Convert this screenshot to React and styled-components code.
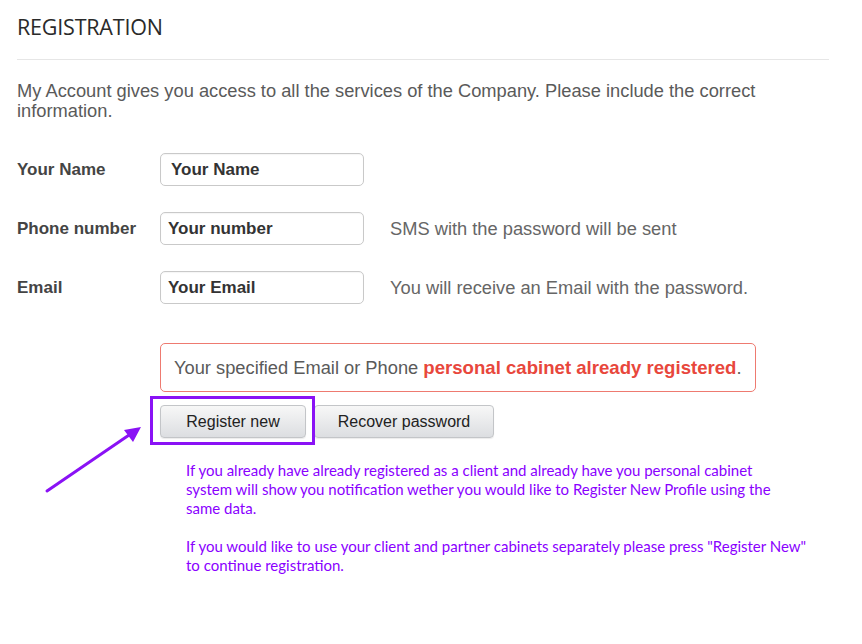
import React from 'react';
import styled, { createGlobalStyle } from 'styled-components';

const GlobalStyle = createGlobalStyle`
  html, body {
    margin: 0;
    padding: 0;
    background: #ffffff;
  }
  body {
    font-family: "Liberation Sans", Arial, sans-serif;
  }
`;

const Page = styled.div`
  position: relative;
  width: 862px;
  height: 644px;
  box-sizing: border-box;
  padding: 13px 33px 0 17px;
`;

const Title = styled.h1`
  margin: 0;
  font-family: "Open Sans", sans-serif;
  font-weight: 400;
  font-size: 21.5px;
  line-height: 27px;
  color: #2a2a2a;
  letter-spacing: -0.2px;
`;

const Rule = styled.hr`
  margin: 19px 0 0 0;
  border: 0;
  border-top: 1px solid #e6e6e6;
  width: 812px;
`;

const Intro = styled.p`
  margin: 21px 0 0 0;
  font-size: 18.3px;
  line-height: 20px;
  color: #5a5a5a;
`;

const Form = styled.div`
  margin-top: 32px;
  display: flex;
  flex-direction: column;
  gap: 26px;
`;

const Row = styled.div`
  display: flex;
  align-items: center;
  height: 33px;
`;

const Label = styled.label`
  width: 143px;
  font-size: 17px;
  font-weight: 700;
  color: #444;
`;

const Field = styled.div`
  width: 204px;
  height: 33px;
  box-sizing: border-box;
  border: 1px solid #c9c9c9;
  border-radius: 5px;
  display: flex;
  align-items: center;
  padding-left: ${(p) => p.$pad}px;
  font-size: 17px;
  font-weight: 700;
  color: #333;
  box-shadow: inset 0 1px 1px rgba(0, 0, 0, 0.04);
`;

const Hint = styled.span`
  margin-left: 26px;
  font-size: 18.3px;
  color: #666;
`;

const Bottom = styled.div`
  margin-left: 143px;
  position: relative;
`;

const ErrorBox = styled.div`
  margin-top: 39px;
  width: 596px;
  height: 49px;
  box-sizing: border-box;
  border: 1px solid #ee7a70;
  border-radius: 5px;
  display: flex;
  align-items: center;
  padding-left: 13px;
  font-size: 18.3px;
  color: #5a5a5a;
`;

const Strong = styled.strong`
  color: #e8473c;
  font-weight: 700;
  font-size: 18.6px;
`;

const Buttons = styled.div`
  margin-top: 13px;
  display: flex;
  gap: 8px;
  position: relative;
`;

const Button = styled.button`
  width: ${(p) => p.$w}px;
  height: 33px;
  border: 1px solid #c3c5c8;
  border-radius: 4px;
  background: linear-gradient(#f7f7f7, #dcdee1);
  box-shadow: 0 1px 1px rgba(0, 0, 0, 0.08);
  font-family: "Liberation Sans", Arial, sans-serif;
  font-size: 16px;
  color: #222;
  padding: 0;
`;

const Highlight = styled.div`
  position: absolute;
  left: -10px;
  top: -9px;
  width: 165px;
  height: 49px;
  box-sizing: border-box;
  border: 3px solid #8a12f5;
  pointer-events: none;
`;

const Notes = styled.div`
  margin: 23px 0 0 26px;
  font-family: Lato, sans-serif;
  font-size: 15px;
  line-height: 19px;
  color: #8a00ff;
`;

const Arrow = styled.svg`
  position: absolute;
  left: 40px;
  top: 420px;
`;

export default function App() {
  return (
    <>
      <GlobalStyle />
      <Page>
        <Title>REGISTRATION</Title>
        <Rule />
        <Intro>
          My Account gives you access to all the services of the Company. Please include the correct
          information.
        </Intro>
        <Form>
          <Row>
            <Label>Your Name</Label>
            <Field $pad={10}>Your Name</Field>
          </Row>
          <Row>
            <Label>Phone number</Label>
            <Field $pad={7}>Your number</Field>
            <Hint>SMS with the password will be sent</Hint>
          </Row>
          <Row>
            <Label>Email</Label>
            <Field $pad={7}>Your Email</Field>
            <Hint>You will receive an Email with the password.</Hint>
          </Row>
        </Form>
        <Bottom>
          <ErrorBox>
            Your specified Email or Phone&nbsp;<Strong>personal cabinet already registered</Strong>.
          </ErrorBox>
          <Buttons>
            <Button $w={146}>Register new</Button>
            <Button $w={180}>Recover password</Button>
            <Highlight />
          </Buttons>
          <Notes>
            If you already have already registered as a client and already have you personal cabinet
            <br />
            system will show you notification wether you would like to Register New Profile using the
            <br />
            same data.
            <br />
            <br />
            If you would like to use your client and partner cabinets separately please press "Register New"
            <br />
            to continue registration.
          </Notes>
        </Bottom>
        <Arrow width="110" height="80" viewBox="0 0 110 80">
          <line x1="7" y1="71" x2="92" y2="13" stroke="#8a12f5" strokeWidth="3" strokeLinecap="round" />
          <polygon points="101,7 84,10 93,22" fill="#8a12f5" />
        </Arrow>
      </Page>
    </>
  );
}
